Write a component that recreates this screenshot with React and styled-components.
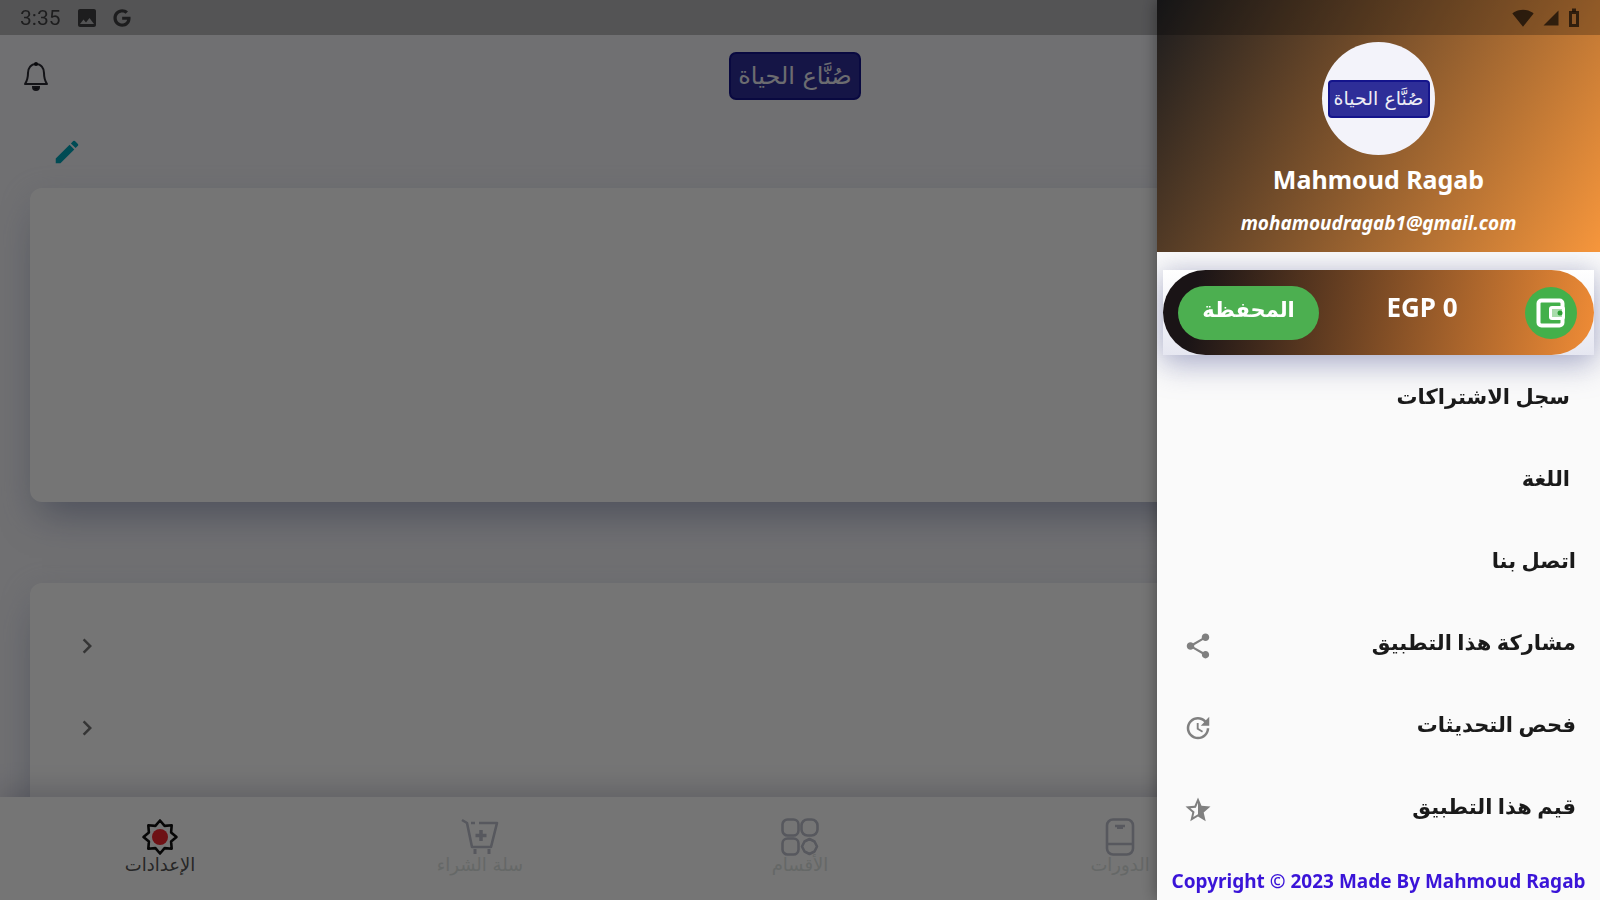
import React from "react";
import styled, { createGlobalStyle } from "styled-components";
import {
    MdEdit,
    MdChevronRight,
    MdShare,
    MdUpdate,
    MdStarHalf,
    MdImage,
    MdSignalWifi4Bar,
    MdSignalCellular4Bar
} from "react-icons/md";
import { FaGoogle } from "react-icons/fa";

const GlobalStyle = createGlobalStyle`
    * {
        box-sizing: border-box;
    }
    body {
        margin: 0;
        background: #f3f3f8;
        font-family: "Noto Sans", "DejaVu Sans", sans-serif;
    }
    button {
        font-family: inherit;
        border: 0;
        padding: 0;
        background: none;
        cursor: pointer;
    }
`;

const Screen = styled.div`
    height: 100vh;
    display: flex;
    flex-direction: column;
    overflow: hidden;
    background: #f3f3f8;
`;

const StatusBar = styled.div`
    position: fixed;
    top: 0;
    left: 0;
    right: 0;
    z-index: 3;
    height: 35px;
    padding: 0 20px;
    display: flex;
    align-items: center;
    justify-content: space-between;
    background: rgba(0, 0, 0, 0.25);
    color: rgba(0, 0, 0, 0.65);
    font-family: Roboto, sans-serif;
    font-size: 21px;
`;

const StatusGroup = styled.div`
    display: flex;
    align-items: center;
    gap: ${props => props.$gap || 8}px;
`;

const AppBar = styled.header`
    flex: none;
    height: 117px;
    padding: 35px 30px 0 20px;
    display: grid;
    grid-template-columns: 1fr auto 1fr;
    align-items: center;
`;

const BellButton = styled.button`
    grid-column: 3;
    justify-self: end;
    width: 32px;
    height: 32px;
`;

const Logo = styled.div`
    grid-column: 2;
    width: ${props => (props.$small ? 102 : 132)}px;
    height: ${props => (props.$small ? 38 : 48)}px;
    border-radius: ${props => (props.$small ? 4 : 7)}px;
    display: flex;
    align-items: center;
    justify-content: center;
    background: #2e2e98;
    border: 2px solid #14148c;
    color: #ececf4;
    font-family: "DejaVu Sans", sans-serif;
    font-size: ${props => (props.$small ? 19 : 24)}px;
    line-height: 1;
    white-space: nowrap;
`;

const Content = styled.main`
    flex: 1;
    min-height: 0;
    overflow: hidden;
    padding: 0 30px;
`;

const EditRow = styled.div`
    height: 71px;
    padding: 20px 22px 0;
    display: flex;
    justify-content: flex-end;
    align-items: flex-start;
    color: #00a3b8;
    font-size: 30px;
    line-height: 1;
    button {
        color: inherit;
        font-size: inherit;
        line-height: 1;
    }
    svg {
        display: block;
    }
`;

const Card = styled.section`
    min-height: ${props => props.$height}px;
    margin-bottom: 81px;
    padding: 22px 42px;
    border-radius: 12px;
    background: #fff;
    box-shadow: 0 24px 36px -12px rgba(110, 120, 160, 0.5), 0 8px 30px rgba(190, 205, 220, 0.25);
`;

const CardRow = styled.button`
    width: 100%;
    height: 82px;
    display: flex;
    align-items: center;
    justify-content: flex-end;
    color: #757575;
    font-size: 30px;
`;

const BottomNav = styled.nav`
    position: relative;
    flex: none;
    height: 103px;
    padding-top: 21px;
    display: grid;
    grid-template-columns: repeat(5, 1fr);
    align-items: start;
    background: #fff;
    box-shadow: 0 -8px 24px rgba(100, 100, 130, 0.28);
`;

const NavItem = styled.button`
    grid-column: ${props => props.$column};
    display: flex;
    flex-direction: column;
    align-items: center;
    color: ${props => (props.$active ? "#111" : "#bdc0cc")};
    font-family: "DejaVu Sans", sans-serif;
    font-size: 18px;
    line-height: 18px;
    svg {
        display: block;
    }
    span {
        color: ${props => (props.$active ? "#555" : "#dde3e1")};
    }
`;

const Scrim = styled.div`
    position: fixed;
    inset: 0;
    z-index: 1;
    background: rgba(0, 0, 0, 0.54);
`;

const Drawer = styled.aside`
    position: fixed;
    top: 0;
    bottom: 0;
    right: 0;
    z-index: 2;
    width: 443px;
    max-width: 100vw;
    display: flex;
    flex-direction: column;
    overflow: hidden;
    background: #fafafa;
    box-shadow: 0 0 16px rgba(0, 0, 0, 0.4);
`;

const Profile = styled.div`
    position: relative;
    flex: none;
    height: 252px;
    padding-top: 42px;
    display: flex;
    flex-direction: column;
    align-items: center;
    background: linear-gradient(120deg, #1c1c1e, #f6963c);
    color: #fff;
`;

const Avatar = styled.div`
    width: 113px;
    height: 113px;
    border-radius: 50%;
    display: flex;
    align-items: center;
    justify-content: center;
    background: #f3f3fa;
`;

const Name = styled.h1`
    margin: 6px 0 0;
    font-size: 25px;
    font-weight: 700;
    line-height: 36px;
`;

const Email = styled.p`
    margin: 14px 0 0;
    font-size: 19px;
    font-style: italic;
    font-weight: 700;
    line-height: 24px;
`;

const WalletBox = styled.div`
    flex: none;
    margin: 18px 6px 4px;
    background: linear-gradient(#fff, #e6e7f1);
    box-shadow: 0 12px 30px rgba(110, 115, 165, 0.4), 0 0 24px rgba(110, 115, 165, 0.3);
`;

const WalletBar = styled.div`
    height: 85px;
    padding: 0 17px 0 15px;
    border-radius: 43px;
    display: flex;
    align-items: center;
    justify-content: space-between;
    background: linear-gradient(100deg, #1a1416 8%, #f08c36);
    color: #fff;
    font-size: 26px;
    font-weight: 700;
`;

const WalletIcon = styled.span`
    width: 52px;
    height: 52px;
    border-radius: 50%;
    display: flex;
    align-items: center;
    justify-content: center;
    background: #43b04a;
`;

const Balance = styled.span`
    padding-bottom: 12px;
`;

const WalletButton = styled.button`
    width: 141px;
    height: 54px;
    padding-bottom: 8px;
    border-radius: 27px;
    background: #4caf50;
    color: #fff;
    font-size: 21px;
    font-weight: 700;
`;

const Menu = styled.ul`
    flex: none;
    margin: 0;
    padding: 0;
    list-style: none;
`;

const MenuItem = styled.button`
    width: 100%;
    height: 82px;
    padding: 0 ${props => (props.$inset ? 30 : 24)}px 0 26px;
    display: flex;
    align-items: center;
    justify-content: space-between;
    color: #1a1a1a;
    font-size: 21px;
    font-weight: 700;
    span {
        padding-bottom: 8px;
    }
    svg {
        color: #808080;
        font-size: 30px;
    }
`;

const FlippedStar = styled(MdStarHalf)`
    transform: scaleX(-1);
`;

const Copyright = styled.p`
    margin: 16px 0 0;
    text-align: center;
    direction: ltr;
    white-space: nowrap;
    color: #3a14d8;
    font-size: 19px;
    font-weight: 700;
    line-height: 28px;
`;

const BellIcon = () => (
    <svg width="32" height="32" viewBox="0 0 32 32" fill="none" stroke="#2a2a32" strokeWidth="2">
        <path d="M16 4c-5 0-8 4-8 9 0 5-1 8-3 11h22c-2-3-3-6-3-11 0-5-3-9-8-9z" strokeLinejoin="round" />
        <circle cx="16" cy="4" r="2" fill="#15151c" stroke="none" />
        <path d="M13 27c0 4 6 4 6 0z" fill="#15151c" />
    </svg>
);

const BatteryIcon = () => (
    <svg width="12" height="20" viewBox="0 0 12 20" fill="none" stroke="currentColor" strokeWidth="3">
        <rect x="2.5" y="4.5" width="7" height="13" />
        <path d="M4 2h4" />
    </svg>
);

const WalletGlyph = () => (
    <svg width="30" height="30" viewBox="0 0 30 30" fill="none" stroke="#fff">
        <rect x="2.5" y="2.5" width="24" height="25" rx="3" strokeWidth="4" />
        <rect x="13" y="8" width="16" height="14" rx="3" fill="#fff" stroke="none" />
        <rect x="16" y="11" width="10" height="8" fill="#a9dcab" stroke="none" />
        <circle cx="24" cy="15" r="2.500" fill="#2f9e36" stroke="none" />
    </svg>
);

const SettingsIcon = () => (
    <svg width="38" height="38" viewBox="0 0 38 38" fill="none" stroke="currentColor" strokeWidth="2.6">
        <path
            d="M19 2.5l4.6 5.4 7.1-.6-.6 7.1 5.4 4.6-5.4 4.6.6 7.1-7.1-.6-4.6 5.4-4.6-5.4-7.1.6.6-7.1L2.5 19l5.4-4.6-.6-7.1 7.1.6z"
            strokeLinejoin="round"
        />
        <circle cx="19" cy="19" r="8" fill="#f0252f" stroke="none" />
    </svg>
);

const CartIcon = () => (
    <svg width="38" height="38" viewBox="0 0 38 38" fill="none" stroke="currentColor" strokeWidth="2.6">
        <path d="M1 2l5 3 5 24h19l6-24H18M10 5h4" strokeLinejoin="round" />
        <path d="M20 12v11M14.500 17.500h11" strokeWidth="3.500" />
        <path d="M14 31v5M28 31v5" strokeWidth="3" />
    </svg>
);

const SectionsIcon = () => (
    <svg width="38" height="38" viewBox="0 0 38 38" fill="none" stroke="currentColor" strokeWidth="2.6">
        <rect x="1.500" y="1.500" width="16" height="16" rx="5" />
        <rect x="20.500" y="1.500" width="16" height="16" rx="6" />
        <rect x="1.500" y="20.500" width="16" height="16" rx="5" />
        <path d="M28.500 21l5 2.500 2.500 5-2.500 5-5 2.500-5-2.500-2.500-5 2.500-5z" strokeLinejoin="round" />
    </svg>
);

const CoursesIcon = () => (
    <svg width="38" height="38" viewBox="0 0 38 38" fill="none" stroke="currentColor" strokeWidth="2.6">
        <rect x="6" y="1.500" width="26" height="35" rx="6" />
        <path d="M6 26h26M14 8h10" />
        <path d="M16 10h6" strokeWidth="2" />
    </svg>
);

const navItems = [
    { label: "الدورات", icon: <CoursesIcon />, column: 2 },
    { label: "الأقسام", icon: <SectionsIcon />, column: 3 },
    { label: "سلة الشراء", icon: <CartIcon />, column: 4 },
    { label: "الإعدادات", icon: <SettingsIcon />, column: 5, active: true }
];

const menuItems = [
    { label: "سجل الاشتراكات", inset: true },
    { label: "اللغة", inset: true },
    { label: "اتصل بنا" },
    { label: "مشاركة هذا التطبيق", icon: <MdShare /> },
    { label: "فحص التحديثات", icon: <MdUpdate /> },
    { label: "قيم هذا التطبيق", icon: <FlippedStar /> }
];

export default () => (
    <>
        <GlobalStyle />
        <StatusBar>
            <StatusGroup $gap={14}>
                <span>3:35</span>
                <MdImage size={24} />
                <FaGoogle size={18} />
            </StatusGroup>
            <StatusGroup>
                <MdSignalWifi4Bar size={22} />
                <MdSignalCellular4Bar size={18} />
                <BatteryIcon />
            </StatusGroup>
        </StatusBar>
        <Screen dir="rtl">
            <AppBar>
                <Logo>صُنَّاع الحياة</Logo>
                <BellButton aria-label="الإشعارات">
                    <BellIcon />
                </BellButton>
            </AppBar>
            <Content>
                <EditRow>
                    <button aria-label="تعديل">
                        <MdEdit />
                    </button>
                </EditRow>
                <Card $height={314} />
                <Card $height={300}>
                    <CardRow aria-label="فتح">
                        <MdChevronRight />
                    </CardRow>
                    <CardRow aria-label="فتح">
                        <MdChevronRight />
                    </CardRow>
                </Card>
            </Content>
            <BottomNav>
                {navItems.map(item => (
                    <NavItem key={item.label} $column={item.column} $active={item.active}>
                        {item.icon}
                        <span>{item.label}</span>
                    </NavItem>
                ))}
            </BottomNav>
        </Screen>
        <Scrim />
        <Drawer dir="rtl">
            <Profile>
                <Avatar>
                    <Logo $small>صُنَّاع الحياة</Logo>
                </Avatar>
                <Name>Mahmoud Ragab</Name>
                <Email>mohamoudragab1@gmail.com</Email>
            </Profile>
            <WalletBox>
                <WalletBar>
                    <WalletIcon>
                        <WalletGlyph />
                    </WalletIcon>
                    <Balance dir="ltr">EGP 0</Balance>
                    <WalletButton>المحفظة</WalletButton>
                </WalletBar>
            </WalletBox>
            <Menu>
                {menuItems.map(item => (
                    <li key={item.label}>
                        <MenuItem $inset={item.inset}>
                            <span>{item.label}</span>
                            {item.icon}
                        </MenuItem>
                    </li>
                ))}
            </Menu>
            <Copyright>Copyright © 2023 Made By Mahmoud Ragab</Copyright>
        </Drawer>
    </>
);
